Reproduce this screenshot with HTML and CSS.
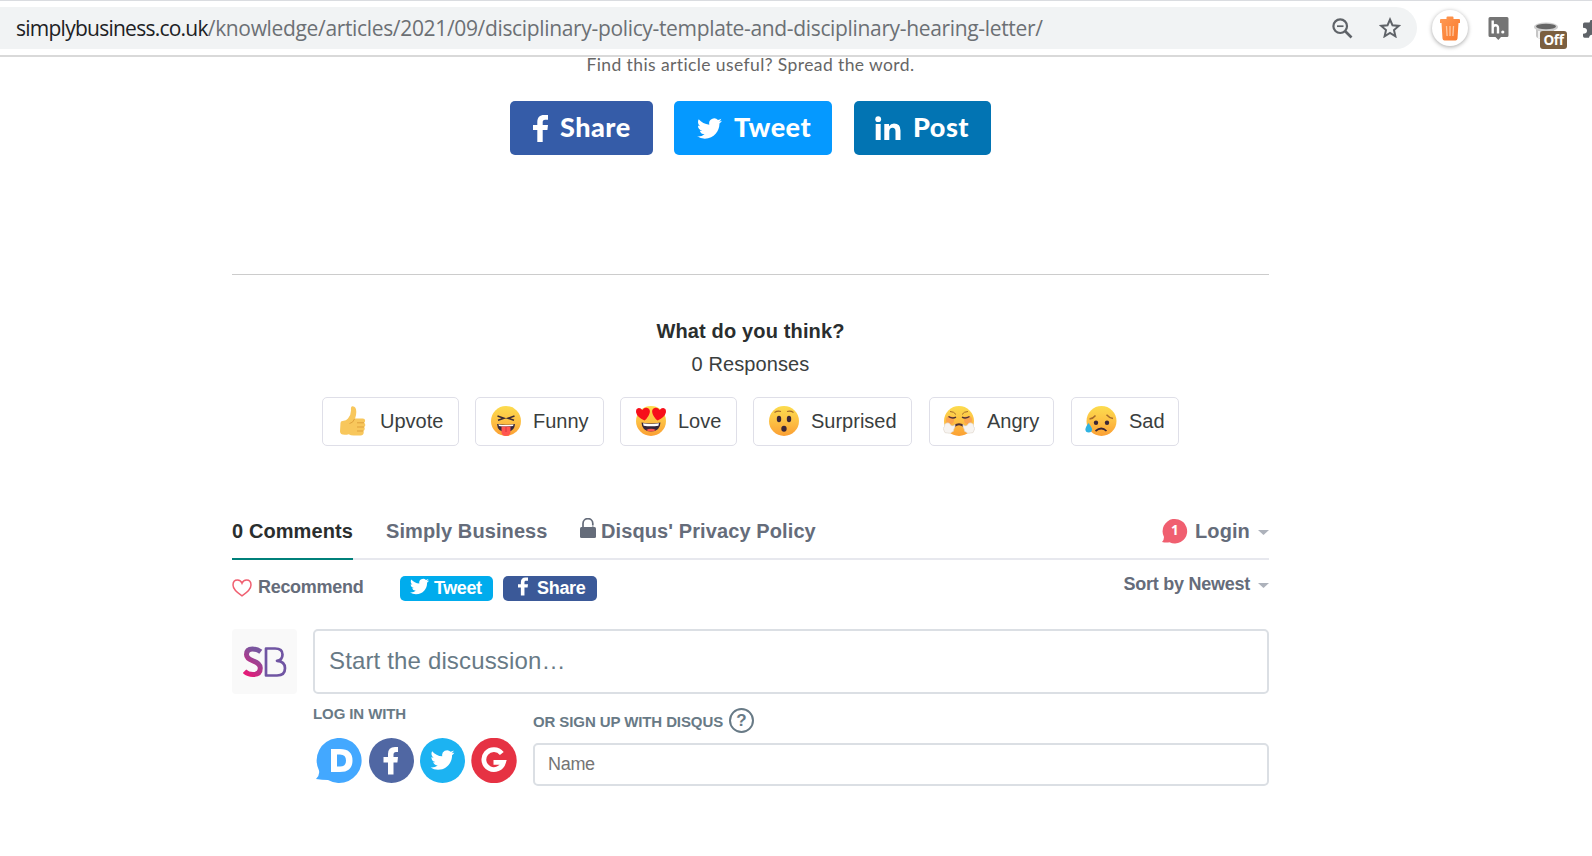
FILE: index.html
```html
<!DOCTYPE html>
<html lang="en">
<head>
<meta charset="utf-8">
<title>Simply Business</title>
<link rel="stylesheet" href="styles.css">
</head>
<body>
<svg class="defs" width="0" height="0">
  <defs>
    <linearGradient id="face" x1="0" y1="0" x2="0" y2="1"><stop offset="0" stop-color="#fcdc4e"/><stop offset=".5" stop-color="#fdc144"/><stop offset="1" stop-color="#fb9f33"/></linearGradient>
    <linearGradient id="sb" x1="0" y1="1" x2=".5" y2="0"><stop offset="0" stop-color="#ec1675"/><stop offset="1" stop-color="#7a569f"/></linearGradient>
    <linearGradient id="bin" x1="0" y1="0" x2="1" y2="1"><stop offset="0" stop-color="#ff9a55"/><stop offset="1" stop-color="#f9792c"/></linearGradient>
    <symbol id="bird" viewBox="0 0 24 24"><path d="M23.95 4.57a10 10 0 0 1-2.82.77 4.96 4.96 0 0 0 2.16-2.72c-.95.55-2 .95-3.13 1.18a4.92 4.92 0 0 0-8.38 4.48C7.69 8.1 4.07 6.13 1.64 3.16a4.9 4.9 0 0 0-.67 2.48c0 1.71.87 3.21 2.19 4.1a4.9 4.9 0 0 1-2.23-.62v.06a4.92 4.92 0 0 0 3.95 4.83 5 5 0 0 1-2.21.08 4.94 4.94 0 0 0 4.6 3.42A9.87 9.87 0 0 1 0 19.54a14 14 0 0 0 7.55 2.21c9.05 0 14-7.5 14-13.98 0-.21 0-.42-.02-.63a9.94 9.94 0 0 0 2.46-2.55z"/></symbol>
    <symbol id="fb" viewBox="0 0 15 27"><path d="M4.3 27V15H0V10h4.300V7C4.300 2.500 6.800 0 11 0h4v4.700h-2.700c-2.100 0-2.600 1-2.600 2.600V10H15l-.6 5H9.700v12z"/></symbol>
  </defs>
</svg>

<header class="toolbar">
  <div class="address">
    <span class="url"><b>simplybusiness.co.uk</b>/knowledge/articles/2021/09/disciplinary-policy-template-and-disciplinary-hearing-letter/</span>
    <svg class="zoom-icon" width="22" height="22" viewBox="0 0 22 22" fill="none" stroke="#5f6368"><circle cx="8.200" cy="8.200" r="6.800" stroke-width="2.200"/><path d="M13 13l6.500 6.500" stroke-width="2.600"/><path d="M5 8.200h6.500" stroke-width="1.700"/></svg>
    <svg class="star-icon" width="22" height="21" viewBox="0 0 22 21" fill="none" stroke="#5f6368" stroke-width="2"><path d="M11 2.500l2.500 5.800 6.300.6-4.800 4.200 1.400 6.200-5.400-3.300-5.400 3.300L7 13.100 2.200 8.900l6.300-.6z"/></svg>
  </div>
  <div class="bin"><svg width="20" height="25" viewBox="0 0 20 25"><path fill="url(#bin)" d="M1 3h5.500V1.500Q6.500.5 7.500.5h5q1 0 1 1V3H19q1 0 1 1v3h-1.500l-1 15.500q-.2 2-2 2h-11q-1.800 0-2-2L1.500 7H0V4q0-1 1-1z"/><path d="M6.500 10l.6 10M10 10v10M13.500 10l-.6 10" stroke="#ffc9a2" stroke-width="1.300"/></svg></div>
  <svg class="hyp" width="21" height="23" viewBox="0 0 21 23"><path fill="#757575" d="M2 0h17q1.500 0 1.500 1.500v17q0 1.500-1.500 1.500h-6l-2.700 3L7.500 20H2Q.5 20 .5 18.500v-17Q.5 0 2 0z"/><path d="M4.700 3.500v13M4.700 11q0-2.700 2.700-2.700T10 11v5.500" fill="none" stroke="#fff" stroke-width="2.400"/><circle cx="14.800" cy="15" r="1.600" fill="#fff"/></svg>
  <div class="off">
    <svg width="26" height="22" viewBox="0 0 26 22"><path d="M3 6v8q0 3 9 3t9-3V6z" fill="#c6c6c6"/><path d="M6 9v7M10 10v7" stroke="#f2f2f2" stroke-width="2"/><ellipse cx="13" cy="5" rx="12" ry="4.500" fill="#cfcfcf"/><ellipse cx="13" cy="4.500" rx="10" ry="2.700" fill="#666"/></svg>
    <span class="off-badge">Off</span>
  </div>
  <svg class="puzzle" width="9" height="18" viewBox="0 0 9 18"><path fill="#5f6368" d="M9 0H7.500L6.500 2.500H1.500Q0 2.500 0 4.200v3.600q4 0 4 3t-4 3V16q0 1.700 1.500 1.700H6q.5-3 3-3z"/></svg>
</header>

<main class="page">
  <p class="spread">Find this article useful? Spread the word.</p>
  <div class="shares">
    <a class="share fbk"><svg width="15" height="27"><use href="#fb"/></svg><span>Share</span></a>
    <a class="share twt"><svg width="25" height="25"><use href="#bird"/></svg><span>Tweet</span></a>
    <a class="share lin"><svg width="26" height="25" viewBox="0 0 26 25"><circle cx="3.200" cy="3.200" r="2.900"/><path d="M.7 8h5v16h-5zM9.300 8H14v2.200q1.700-2.600 5-2.600 6.500 0 6.500 7V24h-5v-8.500q0-3.700-2.900-3.700-3.300 0-3.300 3.900V24h-5z"/></svg><span>Post</span></a>
  </div>

  <section class="reactions">
    <h2>What do you think?</h2>
    <p>0 Responses</p>
    <div class="reaction-list">
      <button class="r1"><svg width="30" height="30" viewBox="0 0 30 30"><path fill="#f8c75c" d="M2.500 17q0-1.700 2-1.900 4-.5 5.500-2.600 3-3.700 3-8Q12.500 0 14.700.2q3.600.3 3.600 5.700 0 3.200-1.200 6.600h7.700q2.300 0 2.300 2t-1 2.300q1.200.7 1.200 2.300t-1.200 2q.8.700.6 2-.2 1.500-1.300 1.900.5.600.3 1.800-.4 2.700-3 2.700h-7q-3 0-5-1.200-1.500.5-4 .5-4.700 0-4.700-3.500z"/><path d="M19 16.800h7M19 21h7M19 25h6.200M16.500 13q-1.500 4-5 4.500" fill="none" stroke="#dfa13c"/></svg>Upvote</button>
      <button class="r2"><svg width="30" height="30" viewBox="0 0 30 30"><circle cx="15" cy="15" r="15" fill="url(#face)"/><path d="M6.500 10l6.500 2.200-6 2M23.500 10L17 12.200l6 2" fill="none" stroke="#3b2b35" stroke-width="1.500"/><path d="M6 18q9 1.500 18 0-.5 8-9 8T6 18z" fill="#35263a"/><path d="M7.500 18.600q7.500 1 15 0l-.4 1.300q-7 1-14.200 0z" fill="#fff"/><path d="M10.500 20.500h9V26q0 4-4.500 4t-4.500-4z" fill="#ff5650"/><path d="M15 21v5" stroke="#d83343"/></svg>Funny</button>
      <button class="r3"><svg width="30" height="30" viewBox="0 0 30 30"><circle cx="15" cy="15" r="15" fill="url(#face)"/><g fill="#f70f1b"><path d="M8.500 14.500Q1 11 .1 6.500q-.5-4 2.600-4.500 2.200-.2 3.600 2Q8 1.400 10.600 1.700q3.700.7 3.200 4.500-.6 4.300-5.300 8.300z"/><path d="M21.500 14.500Q29 11 29.900 6.500q.5-4-2.600-4.500-2.200-.2-3.600 2Q22 1.400 19.400 1.700q-3.700.7-3.200 4.500.6 4.300 5.300 8.300z"/></g><path d="M5.500 16.500q9.500 1.800 19 0-.4 9-9.500 9t-9.500-9z" fill="#35263a"/><path d="M7 17.300q8 1.200 16 0l-.6 2.500q-7.400 1-14.800 0z" fill="#fff"/><path d="M10 24q5-2.500 10 0-5 3-10 0z" fill="#ff5650"/></svg>Love</button>
      <button class="r4"><svg width="30" height="30" viewBox="0 0 30 30"><circle cx="15" cy="15" r="15" fill="url(#face)"/><g fill="#3b2637"><ellipse cx="10" cy="13" rx="2.200" ry="3.200"/><ellipse cx="20" cy="13" rx="2.200" ry="3.200"/><ellipse cx="15" cy="22.800" rx="2.700" ry="3"/></g><path d="M5.500 6.500q3-2 6.500-1M24.500 6.500q-3-2-6.500-1" fill="none" stroke="#a66b2b" stroke-width="1.100"/></svg>Surprised</button>
      <button class="r5"><svg width="32" height="30" viewBox="0 0 32 30"><circle cx="16" cy="15" r="15" fill="url(#face)"/><circle cx="7" cy="14" r="4" fill="#fa8f57" opacity=".6"/><circle cx="25" cy="14" r="4" fill="#fa8f57" opacity=".6"/><g fill="none" stroke="#4b3037" stroke-width="1.400"><path d="M5.500 10.500q4 2.500 7.500.6M26.500 10.500q-4 2.500-7.500.6"/><path d="M7 5.500q4 0 6 3M25 5.500q-4 0-6 3" stroke="#a66b2b" stroke-width="1"/><path d="M11.500 20q4.500-3.500 9 0" stroke-width="1.900"/></g><g fill="#f7f4f1" stroke="#ddd3c8" stroke-width=".6"><path d="M12 18.500q-1.500 2.200-4 1-1.700-3.700-4.300-2.500Q.8 17.700 1.500 20.500-.8 22 1 24.500q.2 3 3.500 2.500 3 1 4.500-1 2-.3 1.800-2.800Q12.500 21 12 18.500zM20 18.500q1.500 2.200 4 1 1.700-3.700 4.300-2.500 2.900.7 2.200 3.500 2.300 1.500.5 4-.2 3-3.500 2.500-3 1-4.500-1-2-.3-1.800-2.800-1.700-2.200-1.200-4.700z"/></g></svg>Angry</button>
      <button class="r6"><svg width="32" height="30" viewBox="0 0 32 30"><circle cx="16.500" cy="15" r="15" fill="url(#face)"/><g fill="#3b2637"><circle cx="11" cy="16.800" r="2.200"/><circle cx="22" cy="16.800" r="2.200"/></g><path d="M10.500 25q6-5 11 0" fill="none" stroke="#3b2637" stroke-width="1.700"/><path d="M4.500 13q3.800-.5 6-3.500M28 12.500q-4-.7-6.500-3.700" fill="none" stroke="#a66b2b" stroke-width="1.400"/><path d="M3.500 17q3.500 4.500 3.500 6.500 0 3-3.300 3T.4 23.500Q.4 21 3.500 17z" fill="#2fb3e2"/></svg>Sad</button>
    </div>
  </section>

  <nav class="tabs">
    <a class="tab active">0 Comments</a>
    <a class="tab t2">Simply Business</a>
    <a class="tab t3"><svg width="16" height="20" viewBox="0 0 16 20"><path d="M3 9V5.500a4.800 4.800 0 0 1 9.800 0V9" fill="none" stroke="#656c7a" stroke-width="1.700"/><path d="M11 8h3.500" stroke="#fff" stroke-width="1"/><rect y="9" width="16" height="11" rx="1.500" fill="#656c7a"/></svg>Disqus' Privacy Policy</a>
    <a class="tab login"><span class="count"><svg width="26" height="26" viewBox="0 0 26 26"><path d="M0 24Q2 22 2 19A12.300 12.300 0 1 1 7.500 24.300Q4 25 0 24z" fill="#f05f70"/></svg><i>1</i></span><span class="login-text">Login</span><span class="caret"></span></a>
  </nav>

  <div class="actions">
    <a class="recommend"><svg width="20" height="18" viewBox="0 0 20 18"><path d="M10 16.800Q1 11 1 6 1 1 5.500 1 8.700 1 10 4.200 11.300 1 14.500 1 19 1 19 6q0 5-9 10.800z" fill="none" stroke="#f05f70" stroke-width="1.500"/></svg><span>Recommend</span></a>
    <a class="mini mtw"><svg width="19" height="19"><use href="#bird"/></svg><span>Tweet</span></a>
    <a class="mini mfb"><svg width="10" height="19"><use href="#fb"/></svg><span>Share</span></a>
    <a class="sort"><span>Sort by Newest</span><span class="caret"></span></a>
  </div>

  <div class="compose">
    <div class="avatar"><svg width="44" height="32" viewBox="0 0 44 32" fill="none"><path d="M17.800 5.800Q14 3 9.500 3 3.500 3 3.500 8.500q0 4 6.500 6.300 7.300 2.500 7.300 7.200 0 6.500-7.300 6.500-5 0-8.500-3.300" stroke="url(#sb)" stroke-width="5"/><path d="M23 2.500h9q7.500 0 7.500 6 0 5.500-5.500 6.300 8 .4 8 7.500 0 7.200-8 7.200H23z" stroke="#7055a3" stroke-width="2.700" stroke-linejoin="round"/></svg></div>
    <div class="entry">
      <div class="box discuss">Start the discussion…</div>
      <div class="auth">
        <div class="connect">
          <h6>Log in with</h6>
          <div class="circles">
            <svg width="47" height="46" viewBox="0 0 47 46"><path d="M0 41Q4 37 3 32.500A22.500 22.500 0 1 1 12 42Q6 42 0 41z" fill="#43a8ff"/><path fill="#fff" fill-rule="evenodd" d="M15 11h9q12.500 0 12.500 11.500T24 34h-9zm6 5.500v12h3q6 0 6-6t-6-6z"/></svg>
            <svg width="45" height="45" viewBox="0 0 45 45"><circle cx="22.500" cy="22.500" r="22.500" fill="#5067a3"/><path fill="#fff" d="M19 36.500V24.500h-4.500V19H19v-3q0-7 7-7h3v5h-2q-2.500 0-2.500 2.500V19H29l-.6 5.500h-3.900v12z"/></svg>
            <svg width="45" height="45" viewBox="0 0 45 45"><circle cx="22.500" cy="22.500" r="22.500" fill="#1cb3f2"/><svg x="10.500" y="10" width="24" height="24" fill="#fff"><use href="#bird"/></svg></svg>
            <svg width="46" height="45" viewBox="0 0 46 45"><circle cx="23" cy="22.500" r="22.700" fill="#e63243"/><path d="M30.800 15.500A10 10 0 1 0 32.500 24.300H22.500" fill="none" stroke="#fff" stroke-width="4.800"/></svg>
          </div>
        </div>
        <div class="signup">
          <h6><span>or sign up with Disqus</span><i class="help">?</i></h6>
          <div class="box name">Name</div>
        </div>
      </div>
    </div>
  </div>
</main>
</body>
</html>
```
FILE: styles.css
```css
* { box-sizing: border-box; }
body { margin: 0; background: #fff; height: 856px; overflow: hidden; font-family: "Liberation Sans", Arial, sans-serif; }
h2, h6, p { margin: 0; }
i { font-style: normal; }
svg { display: block; flex: none; }
.defs { position: absolute; }

.toolbar { height: 57px; border-top: 1px solid #dadce0; border-bottom: 2px solid #d9d9d9; display: flex; align-items: flex-start; padding-top: 6px; overflow: hidden; }
.address { width: 1417px; height: 42px; flex: none; background: #f1f3f4; border-radius: 0 21px 21px 0; display: flex; align-items: flex-start; padding-left: 16px; }
.url { width: 1316px; font: 21px/43px "Open Sans", sans-serif; letter-spacing: -.34px; color: #6c7074; white-space: nowrap; }
.url b { font-weight: 400; color: #202124; letter-spacing: -.75px; }
.zoom-icon { margin-top: 11px; }
.star-icon { margin: 10px 0 0 25px; }
.bin { width: 36px; height: 36px; flex: none; margin: 3px 0 0 15px; border-radius: 50%; background: #fff; box-shadow: 0 1px 4px rgba(0,0,0,.35); display: flex; align-items: center; justify-content: center; }
.hyp { margin: 10px 0 0 20px; }
.off { position: relative; margin: 15px 0 0 24px; }
.off-badge { position: absolute; left: 7px; top: 9px; width: 27px; height: 18px; border-radius: 3px; background: #7b5f40; color: #fff; font: bold 13.5px/19px "Open Sans", sans-serif; text-align: center; letter-spacing: -.4px; }
.puzzle { margin: 13px 0 0 24px; }

.page { width: 1037px; margin-left: 232px; }
.spread { height: 44px; text-align: center; font: 17.5px/15px Lato, sans-serif; letter-spacing: .4px; color: #666; }
.shares { display: flex; justify-content: center; height: 174px; border-bottom: 1px solid #ccc; }
.share { height: 54px; border-radius: 5px; color: #fff; fill: #fff; display: flex; align-items: center; font: 900 27px/52px Lato, sans-serif; letter-spacing: .5px; white-space: nowrap; }
.share span { margin-left: 12px; height: 54px; }
.fbk { width: 143px; background: #355ca8; padding-left: 23px; margin-right: 21px; }
.twt { width: 158px; background: #0599ff; padding-left: 23px; margin-right: 22px; }
.lin { width: 137px; background: #0274b3; padding-left: 21px; }

.reactions { height: 234px; color: #2a2e2e; text-align: center; padding-top: 44px; }
.reactions h2 { font-size: 20px; line-height: 24px; letter-spacing: .15px; }
.reactions p { font-size: 20px; line-height: 24px; margin: 9px 0 21px; letter-spacing: .1px; color: #3a3e3e; }
.reaction-list { display: flex; justify-content: center; gap: 16px; }
.reaction-list button { height: 49px; margin: 0; border: 1px solid #dfdfe8; border-radius: 5px; background: #fff; font: 20px/24px "Liberation Sans", Arial, sans-serif; color: #3a3e3e; padding: 0 0 2px 15px; display: flex; align-items: center; gap: 12px; white-space: nowrap; }
.r1 { width: 137px; } .r2 { width: 129px; } .r3 { width: 117px; } .r4 { width: 159px; } .r5 { width: 125px; } .r6 { width: 108px; }
.reaction-list .r5, .reaction-list .r6 { padding-left: 13px; margin-left: 1px; }

.tabs { height: 51px; border-bottom: 2px solid #e7e8ee; display: flex; }
.tab { height: 51px; font-weight: bold; font-size: 20px; line-height: 28px; color: #656c7a; letter-spacing: .1px; white-space: nowrap; }
.active { width: 121px; color: #2a2e2e; border-bottom: 2px solid #00807a; }
.tabs .tab { padding-top: 8px; }
.t2 { margin-left: 33px; width: 161px; }
.t3 { margin-left: 33px; display: flex; gap: 5px; }
.t3 svg { margin-top: 1px; }
.login { margin-left: auto; display: flex; }
.count { position: relative; width: 26px; margin-top: 1px; }
.count i { position: absolute; left: 0; top: 0; width: 26px; text-align: center; color: #fff; font: bold 13.5px/24px "Open Sans", sans-serif; }
.login-text { margin-left: 7px; width: 56px; }
.caret { width: 11px; height: 5px; background: #adb2bb; clip-path: polygon(0 0, 100% 0, 50% 100%); margin: 13px 0 0 7px; }

.actions { height: 69px; display: flex; font-weight: bold; color: #656c7a; font-size: 18px; letter-spacing: -.3px; white-space: nowrap; }
.recommend { width: 168px; display: flex; padding-top: 19px; }
.recommend span { line-height: 20px; margin: -2px 0 0 6px; }
.mini { height: 25px; margin-top: 16px; border-radius: 5px; color: #fff; fill: #fff; display: flex; line-height: 24px; }
.mtw { width: 93px; background: #00aced; padding-left: 10px; }
.mtw svg { margin-top: 1px; }
.mtw span { margin-left: 5px; letter-spacing: -.4px; }
.mfb { width: 94px; background: #3b5998; margin-left: 10px; padding-left: 15px; }
.mfb svg { margin-top: 1px; }
.mfb span { margin-left: 9px; }
.sort { margin-left: auto; display: flex; padding-top: 14px; line-height: 20px; letter-spacing: -.25px; }
.sort .caret { margin: 9px 0 0 8px; }

.compose { display: flex; }
.avatar { width: 65px; height: 65px; border-radius: 4px; background: #f9f9f9; display: flex; align-items: center; justify-content: center; }
.entry { margin-left: 16px; width: 956px; }
.box { border: 2px solid #dbdfe4; border-radius: 5px; white-space: nowrap; }
.discuss { height: 65px; padding-left: 14px; font-size: 24px; line-height: 60px; color: #687a86; letter-spacing: .15px; }
.auth { display: flex; }
.connect { width: 220px; padding-top: 10px; }
.auth h6 { font-size: 15px; line-height: 20px; color: #687a86; text-transform: uppercase; white-space: nowrap; letter-spacing: -.1px; }
.circles { display: flex; gap: 6px; margin: 14px 0 0 3px; }
.signup { width: 736px; padding-top: 14px; }
.signup h6 { display: flex; height: 35px; align-items: flex-start; }
.signup h6 span { padding-top: 4px; width: 196px; }
.help { width: 25px; height: 25px; border: 2px solid #687a86; border-radius: 50%; text-align: center; font-size: 17px; line-height: 22px; }
.name { height: 43px; padding-left: 13px; font-size: 18px; line-height: 38px; color: #757575; letter-spacing: -.3px; }
```
